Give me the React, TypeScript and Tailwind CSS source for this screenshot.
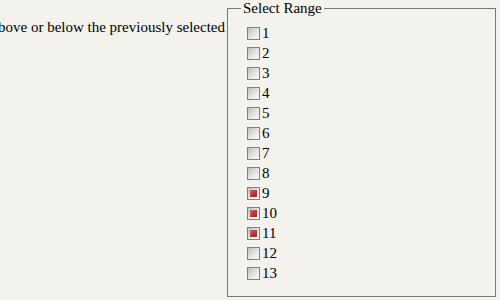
import React from "react";

const items = Array.from({ length: 13 }, (_, i) => i + 1);
const checked = new Set([9, 10, 11]);

function Box({ on }: { on: boolean }) {
  return (
    <span className="flex h-[13px] w-[13px] shrink-0 items-center justify-center border border-[#808080] bg-gradient-to-br from-[#bdbdbd] via-[#e2e2e2] to-[#fdfdfd]">
      {on && (
        <span className="block h-[7px] w-[7px] bg-gradient-to-br from-[#e06060] via-[#b93a3a] to-[#9c2a2a]" />
      )}
    </span>
  );
}

export default function App() {
  return (
    <div
      className="flex h-[300px] w-[500px] overflow-hidden bg-[#f3f2ed] text-[15px] text-black"
      style={{ fontFamily: '"Liberation Serif", "Times New Roman", serif' }}
    >
      <div className="flex w-[227px] shrink-0 justify-end overflow-hidden whitespace-nowrap pr-[2px] pt-[18px] leading-[18px]">
        <span>above or below the previously selected</span>
      </div>
      <fieldset className="m-0 h-[297px] w-[269px] border border-[#777] px-[19px] pb-0 pt-[6px]">
        <legend className="ml-[-6px] px-[2px] leading-[17px]">Select Range</legend>
        <div className="flex flex-col">
          {items.map((n) => (
            <label key={n} className="flex h-[20px] items-center leading-[18px]">
              <Box on={checked.has(n)} />
              <span className="ml-[2px]">{n}</span>
            </label>
          ))}
        </div>
      </fieldset>
    </div>
  );
}
